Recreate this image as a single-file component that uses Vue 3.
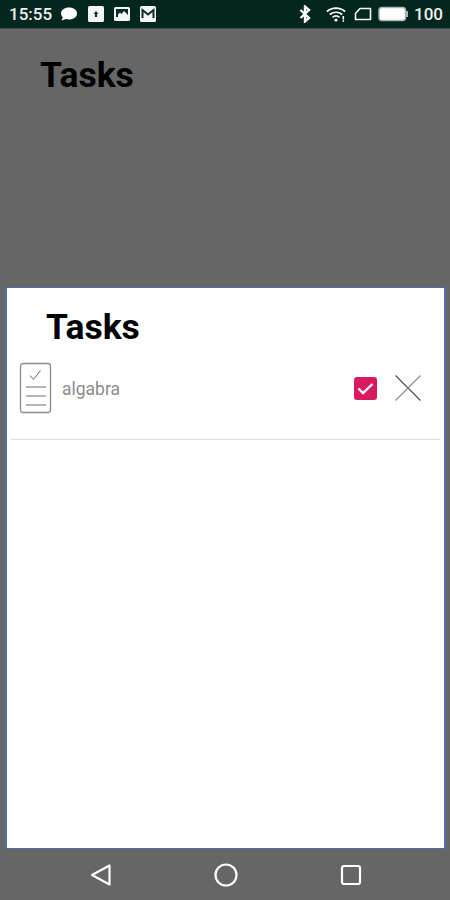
<script setup>
const title = 'Tasks'
</script>

<template>
  <div class="screen">
    <header class="status">
      <div class="status-left">
        <span class="time">15:55</span>
        <svg class="ic" width="20" height="18" viewBox="0 0 20 18"><path d="M10 2.500c4.600 0 8 2.500 8 6s-3.400 6-8 6c-1 0-2-.1-2.900-.4L2.500 15.500l1.300-3.300C2.700 11.200 2 9.900 2 8.500c0-3.500 3.400-6 8-6z" fill="#fff"/></svg>
        <svg class="ic" width="18" height="18" viewBox="0 0 18 18"><rect x="1" y="1" width="16" height="16" rx="1.500" fill="#f4f6f5"/><path d="M9 6l2.500 3h-1.500v3H8V9H6.500z" fill="#0a2b25"/></svg>
        <svg class="ic" width="18" height="18" viewBox="0 0 18 18"><rect x="1" y="2" width="16" height="14" rx="1.500" fill="#f4f6f5"/><rect x="3" y="4" width="12" height="8" fill="#0a2b25"/><path d="M5 12l0-2.500 2-2 1.500 1.500L11 6l4 4v2z" fill="#f4f6f5"/></svg>
        <svg class="ic" width="18" height="18" viewBox="0 0 18 18"><rect x="1" y="1" width="16" height="16" rx="1.500" fill="#f4f6f5"/><path d="M3.500 13V5l5.500 4.500L14.500 5v8" fill="none" stroke="#0a2b25" stroke-width="2"/></svg>
      </div>
      <div class="status-right">
        <svg class="ic" width="14" height="18" viewBox="0 0 14 18"><path d="M2.500 5l8.500 8-4 3.500v-15l4 3.500-8.500 8" fill="none" stroke="#fff" stroke-width="2.400"/></svg>
        <svg class="ic wifi" width="20" height="18" viewBox="0 0 20 18"><path d="M1 6.500C6 2 14 2 19 6.500M3.800 9.500c3.500-3 8.900-3 12.400 0M6.500 12.300c2-1.700 5-1.700 7 0" fill="none" stroke="#fff" stroke-width="1.700"/><circle cx="10" cy="15" r="1.600" fill="#fff"/><rect x="16.500" y="11" width="1.600" height="3.500" fill="#fff"/><rect x="16.500" y="15.200" width="1.600" height="1.600" fill="#fff"/></svg>
        <svg class="ic" width="18" height="16" viewBox="0 0 18 16"><path d="M6 2.500h10.500v11h-15v-6z" fill="none" stroke="#f4f6f5" stroke-width="1.600" stroke-linejoin="round"/></svg>
        <svg class="ic" width="30" height="16" viewBox="0 0 30 16"><rect x="1" y="1.500" width="26.500" height="13" rx="3" fill="#fff" stroke="#a9b6b2" stroke-width="1.500"/><rect x="28" y="5" width="2" height="6" fill="#a9b6b2"/></svg>
        <span class="level">100</span>
      </div>
    </header>

    <section class="backdrop-head">
      <h1 class="page-title">{{ title }}</h1>
    </section>

    <main class="sheet">
      <h2 class="sheet-title">{{ title }}</h2>
      <div class="task">
        <svg class="doc" width="33" height="52" viewBox="0 0 33 52">
          <rect x="1.500" y="1.500" width="30" height="49" rx="2.500" fill="#fff" stroke="#8a8a8a" stroke-width="1.300"/>
          <path d="M11 13.500l3.500 4 7-9" fill="none" stroke="#666" stroke-width="1"/>
          <path d="M7 25h20M7 34h20M7 43h20" stroke="#b5b5b5" stroke-width="2.200"/>
        </svg>
        <span class="task-name">algabra</span>
        <span class="check">
          <svg width="23" height="23" viewBox="0 0 23 23"><path d="M4.500 11.500l4.500 4.500 9.500-9" fill="none" stroke="#fff" stroke-width="2.400"/></svg>
        </span>
        <svg class="close" width="28" height="28" viewBox="0 0 28 28"><path d="M1.500 1.500l25 25" stroke="#555" stroke-width="1.200"/><path d="M26.500 1.500l-25 25" stroke="#8f8f8f" stroke-width="1.200"/></svg>
      </div>
      <div class="divider"></div>
    </main>

    <nav class="nav">
      <svg width="22" height="24" viewBox="0 0 22 24"><path d="M19.500 2.500v19L2 12z" fill="none" stroke="#fff" stroke-width="2.200" stroke-linejoin="round"/></svg>
      <svg width="24" height="24" viewBox="0 0 24 24"><circle cx="12" cy="12" r="10.500" fill="none" stroke="#fff" stroke-width="2.200"/></svg>
      <svg width="22" height="22" viewBox="0 0 22 22"><rect x="2" y="2" width="18" height="18" rx="2" fill="none" stroke="#fff" stroke-width="2.200"/></svg>
    </nav>
  </div>
</template>

<style>
html, body { margin: 0; background: #666; }
</style>

<style scoped>
.screen {
  width: 450px;
  height: 900px;
  display: flex;
  flex-direction: column;
  background: #666;
  font-family: Roboto, "Liberation Sans", sans-serif;
  overflow: hidden;
}
.status {
  height: 29px;
  flex: none;
  box-sizing: border-box;
  background: #03261f;
  border-bottom: 1px solid #3d4f4b;
  display: flex;
  justify-content: space-between;
  align-items: center;
  padding: 0 7px 0 9px;
  color: #eef2f1;
  font-size: 17px;
  font-weight: 500;
}
.status-left, .status-right { display: flex; align-items: center; }
.status-left { gap: 8px; }
.status-right { gap: 6px; }
.ic { display: block; }
.wifi { margin: 0 2px 0 8px; }
.time { margin-right: -1px; }
.level { font-size: 17px; }
.backdrop-head {
  height: 258px;
  flex: none;
  box-sizing: border-box;
  padding: 27px 0 0 40px;
}
.page-title {
  margin: 0;
  font-size: 35.500px;
  line-height: 38px;
  font-weight: 700;
  color: #000;
}
.sheet {
  flex: 1;
  margin: 0 4px 0 5px;
  box-sizing: border-box;
  background: #fff;
  border: 1px solid #4f6fa8;
  border-left-width: 2px;
  border-right-width: 2px;
  display: flex;
  flex-direction: column;
}
.sheet-title {
  margin: 20px 0 0 39px;
  font-size: 35.500px;
  line-height: 38px;
  font-weight: 700;
  color: #000;
}
.task {
  display: flex;
  align-items: center;
  margin: 16px 0 0 12px;
  height: 52px;
}
.doc { flex: none; }
.task-name {
  margin: 2px 0 0 10px;
  font-size: 17.500px;
  color: #8c8c8c;
  flex: 1;
}
.check {
  width: 23px;
  height: 23px;
  border-radius: 3px;
  background: #d81b60;
  flex: none;
}
.check svg { display: block; }
.close {
  flex: none;
  margin: 0 22px 0 17px;
}
.divider {
  height: 1px;
  background: #ddd;
  margin: 25px 4px 0 4px;
}
.nav {
  height: 51px;
  flex: none;
  display: flex;
  align-items: center;
  padding: 0 88px 0 90px;
  justify-content: space-between;
  background: #666;
}
</style>
